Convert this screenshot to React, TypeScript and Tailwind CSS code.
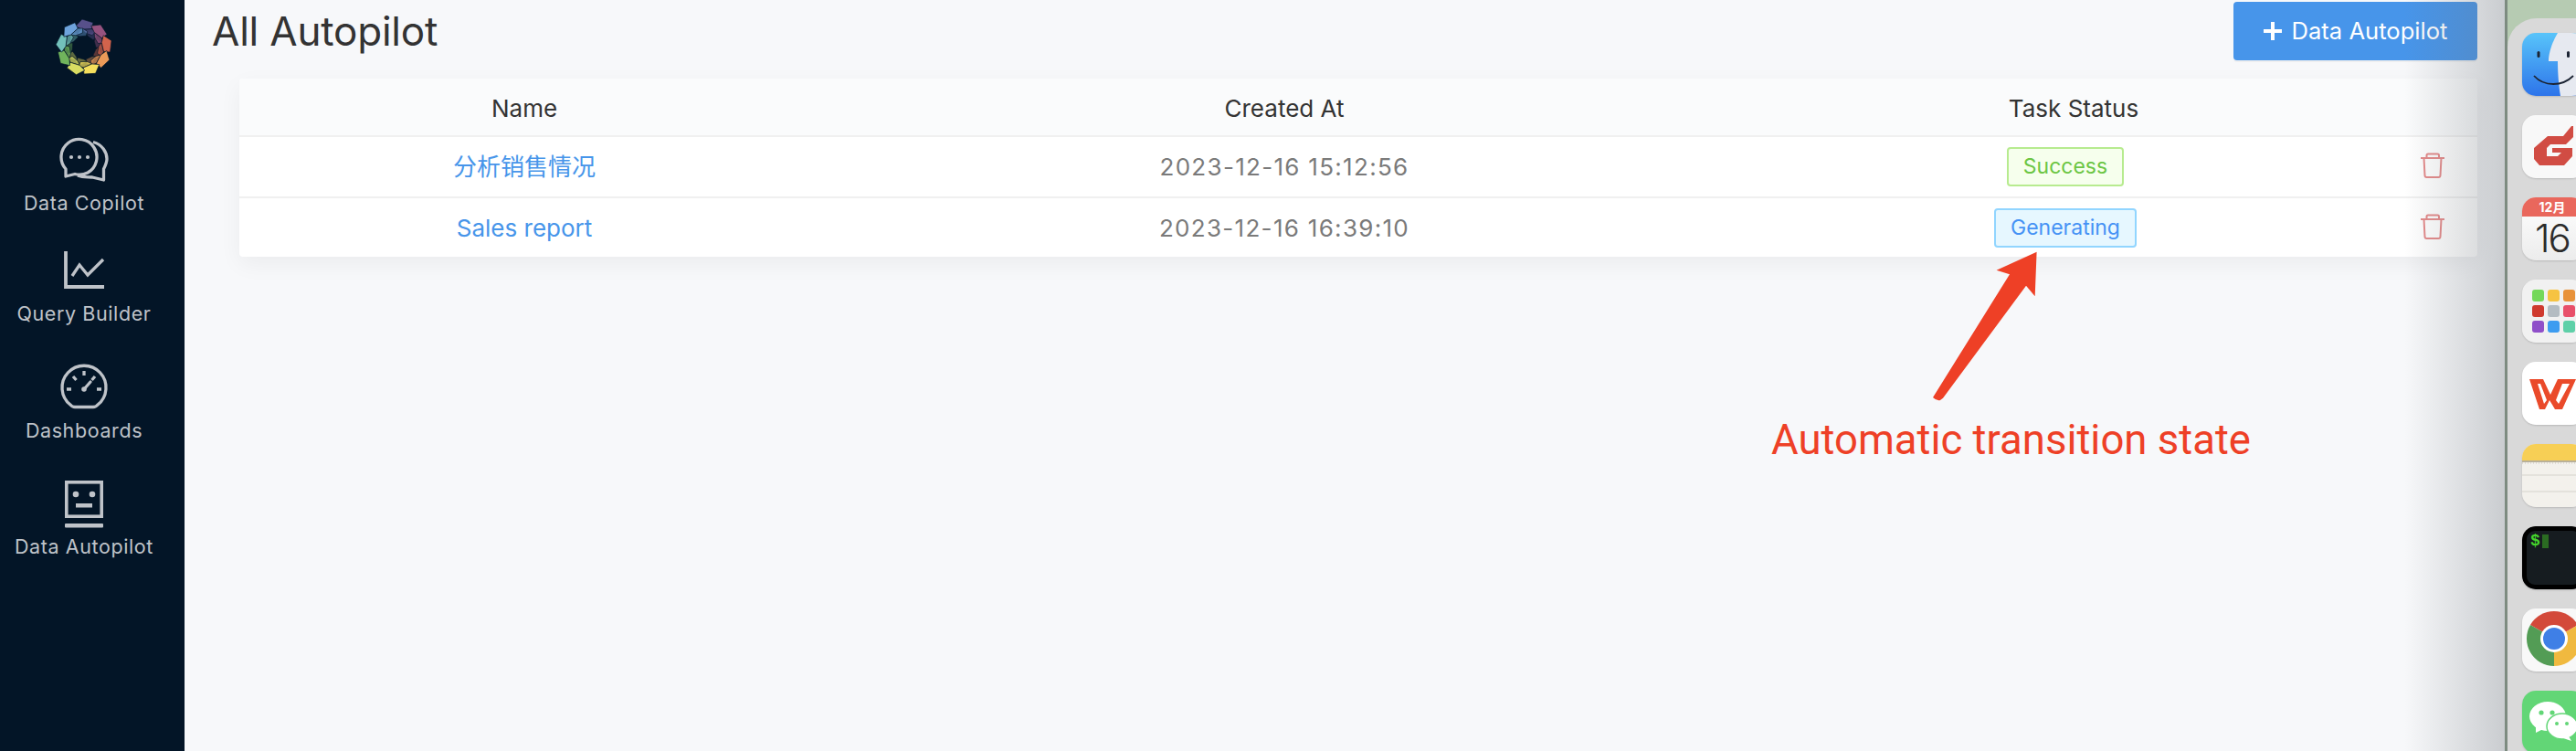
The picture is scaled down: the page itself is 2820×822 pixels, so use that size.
import React from 'react';

const petals = [
  { angle: 0, color: '#57508a' },
  { angle: 40, color: '#96527f' },
  { angle: 80, color: '#d2634c' },
  { angle: 120, color: '#ec9a58' },
  { angle: 160, color: '#f4de5c' },
  { angle: 200, color: '#d9dc62' },
  { angle: 240, color: '#70b45c' },
  { angle: 280, color: '#73c1bb' },
  { angle: 320, color: '#6ea3dc' },
];

// petal bands as [radius, degrees] pairs, swept clockwise going inward
const bands: { pts: [number, number][]; opacity: number }[] = [
  { pts: [[16, 6], [21, 36], [18, 52], [13, 50], [13, 20]], opacity: 0.42 },
  { pts: [[20, -6], [22, 22], [21, 36], [16, 34], [16, 6]], opacity: 0.72 },
  { pts: [[25, -22], [31, -4], [29, 20], [22, 22], [20, -6]], opacity: 1 },
];

const toPoints = (pts: [number, number][]) =>
  pts
    .map(([r, d]) => {
      const a = (d * Math.PI) / 180;
      return `${(r * Math.sin(a)).toFixed(2)},${(-r * Math.cos(a)).toFixed(2)}`;
    })
    .join(' ');

const Logo: React.FC = () => (
  <svg width="66" height="66" viewBox="-33 -33 66 66">
    {petals.map((p) => (
      <g key={p.angle} transform={`rotate(${p.angle})`} fill={p.color} stroke="#031527" strokeWidth="0.6">
        {bands.map((b) => (
          <polygon key={b.opacity} points={toPoints(b.pts)} fillOpacity={b.opacity} />
        ))}
      </g>
    ))}
  </svg>
);

const ChatIcon = () => (
  <svg width="54" height="54" viewBox="0 0 54 54" fill="none" stroke="#bfc3c9" strokeWidth="3.3" strokeLinejoin="round">
    <path d="M7 46 V38 A19.5 19.5 0 1 1 31 42 A20 20 0 0 1 17 43.5 Z" />
    <path d="M37 8.5 C47 11 52 20 52 27 C52 31 50 35 48.5 38 V50 L36 47 C31 46.5 26 47.5 20 45" />
    <g fill="#bfc3c9" stroke="none">
      <circle cx="13" cy="25" r="2.1" />
      <circle cx="22" cy="25" r="2.1" />
      <circle cx="31" cy="25" r="2.1" />
    </g>
  </svg>
);

const ChartIcon = () => (
  <svg width="54" height="54" viewBox="0 0 54 54" fill="none" stroke="#bfc3c9">
    <path d="M7 7 V46 H49" strokeWidth="3.8" />
    <path d="M14 34 L22 22 L31 33 L48 16" strokeWidth="3.3" />
  </svg>
);

const GaugeIcon = () => (
  <svg width="54" height="54" viewBox="0 0 54 54" fill="none" stroke="#bfc3c9" strokeWidth="3.3">
    <path d="M17 48.5 H37 Q40 48.5 42 46 A24 24 0 1 0 12 46 Q14 48.5 17 48.5 Z" />
    <path d="M27 9 V14 M15 15 L18.5 19 M39 15 L35.5 19 M8 29 H13 M41 29 H46" />
    <path d="M27 29 L34 21" strokeLinecap="round" />
    <circle cx="27" cy="29" r="2.8" fill="#bfc3c9" stroke="none" />
  </svg>
);

const RobotIcon = () => (
  <svg width="54" height="54" viewBox="0 0 54 54" fill="none">
    <rect x="7.8" y="2.8" width="38.4" height="37.4" stroke="#bfc3c9" strokeWidth="3.6" />
    <circle cx="18" cy="16" r="3.3" fill="#bfc3c9" />
    <circle cx="36" cy="16" r="3.3" fill="#bfc3c9" />
    <rect x="18" y="26" width="18" height="4.5" fill="#bfc3c9" />
    <rect x="6" y="48" width="42" height="4.5" rx="1" fill="#bfc3c9" />
  </svg>
);

const TrashIcon = () => (
  <svg width="28" height="28" viewBox="0 0 28 28" fill="none" stroke="#e58a8a" strokeWidth="2">
    <path d="M1 6 H27" />
    <path d="M7.5 6 V3 Q7.5 1.5 9 1.5 H19.5 Q21 1.5 21 3 V6" />
    <path d="M4.5 6 L5.5 25 Q5.6 27 7.5 27 H20.5 Q22.4 27 22.5 25 L23.5 6" />
  </svg>
);

const SideItem: React.FC<{ icon: React.ReactNode; label: string; className: string }> = ({ icon, label, className }) => (
  <div className={`flex flex-col items-center ${className}`}>
    {icon}
    <span className="h-[26px] whitespace-nowrap text-[21.5px] leading-[26px] tracking-[0.6px] text-[#bfc3c9]">{label}</span>
  </div>
);

const Finder = () => (
  <svg width="69" height="69" viewBox="0 0 69 69">
    <defs>
      <linearGradient id="finderBlue" x1="0" y1="0" x2="0" y2="1">
        <stop offset="0" stopColor="#58c4fa" />
        <stop offset="1" stopColor="#2d74ea" />
      </linearGradient>
    </defs>
    <rect width="69" height="69" fill="url(#finderBlue)" />
    <path d="M39 0 C33 10 29 22 29 31 H39 C39 44 40 58 42 69 H69 V0 Z" fill="#e6e9f0" />
    <rect x="16.5" y="20" width="3" height="7" rx="1.5" fill="#1c2433" />
    <rect x="49" y="20" width="3" height="7" rx="1.5" fill="#1c2433" />
    <path d="M13 47 C24 59 44 59 56 47" fill="none" stroke="#1c2433" strokeWidth="1.8" />
  </svg>
);

const GApp = () => (
  <svg width="69" height="69" viewBox="0 0 69 69">
    <rect width="69" height="69" fill="#f8f8f8" />
    <path d="M13 36 L28 23 H45 L54 12 H56 V24 L48 32 H31 L27 36 V45 H39 L43 41 H33 V36 H55 V45 L46 55 H19 L13 48 Z" fill="#d14c43" />
  </svg>
);

const Calendar = () => (
  <div className="flex h-full w-[59px] flex-col bg-gradient-to-b from-white to-[#ececec]">
    <div className="flex h-[21px] items-center justify-center bg-[#e9675c] pl-[7px] text-[14px] font-bold text-white">12月</div>
    <div className="pl-[7px] text-center text-[42px] leading-[47px] font-light tracking-[-2px] text-[#2b2b2b]">16</div>
  </div>
);

const launchColors = ['#74d85a', '#f6c342', '#e8923a', '#cf3a2e', '#b4bcc2', '#e8506a', '#8f4fc9', '#3d9cf0', '#5ed0a8'];

const Launchpad = () => (
  <div className="grid h-full w-full grid-cols-[13px_13px_13px] content-start gap-x-[4px] gap-y-[4px] bg-[#f1f1f1] pt-[11px] pl-[11px]">
    {launchColors.map((c) => (
      <svg key={c} width="13" height="13" viewBox="0 0 13 13">
        <rect width="13" height="13" rx="3" fill={c} />
      </svg>
    ))}
  </div>
);

const Wps = () => (
  <svg width="69" height="69" viewBox="0 0 69 69">
    <rect width="69" height="69" fill="#fff" />
    <path d="M8 19 H23 L31 36 L39 19 H59 L44 52 H36 L30 42 L25 52 H19 Z" fill="#ea4a2a" />
    <path d="M17 24 H20 L27 42 L24 46 Z M44 24 H52 L40 46 L37 42 Z" fill="#fff" />
  </svg>
);

const Notes = () => (
  <svg width="69" height="69" viewBox="0 0 69 69">
    <rect width="69" height="69" fill="#f3f1ec" />
    <rect width="69" height="18" fill="#f7cf55" />
    <rect y="18" width="69" height="2" fill="#b8b09a" />
    <path d="M0 21 H69" stroke="#c9c5ba" strokeDasharray="1 2" />
    <path d="M0 34 H69 M0 52 H69" stroke="#d6d3cc" strokeWidth="1.2" />
  </svg>
);

const Terminal = () => (
  <div className="relative h-full w-full rounded-[14px] border-[5px] border-black bg-[#161c20] shadow-[0_1px_2px_rgba(0,0,0,.5)]">
    <span className="absolute top-[2px] left-[4px] font-['Liberation_Mono',monospace] text-[18px] leading-[18px] font-bold text-[#45d42c]">$</span>
    <div className="absolute top-[4px] left-[17px] h-[15px] w-[7px] bg-[#2b6b22]" />
  </div>
);

const Chrome = () => (
  <svg width="69" height="69" viewBox="0 0 69 69">
    <rect width="69" height="69" fill="#f8f8f8" />
    <path d="M35 33 L61 18 A30 30 0 0 0 9 18 Z" fill="#d3493a" />
    <path d="M35 33 L61 18 A30 30 0 0 1 35 63 Z" fill="#f0b93f" />
    <path d="M35 33 L35 63 A30 30 0 0 1 9 18 Z" fill="#539c55" />
    <circle cx="35" cy="33" r="15" fill="#fff" />
    <circle cx="35" cy="33" r="12" fill="#3f7fe6" />
  </svg>
);

const WeChat = () => (
  <svg width="69" height="69" viewBox="0 0 69 69">
    <rect width="69" height="69" fill="#62d676" />
    <ellipse cx="28" cy="28" rx="20" ry="16" fill="#fff" />
    <path d="M15 38 L15 46 L25 41 Z" fill="#fff" />
    <circle cx="21" cy="24" r="2.6" fill="#62d676" />
    <circle cx="33" cy="24" r="2.6" fill="#62d676" />
    <ellipse cx="44" cy="39" rx="17" ry="14" fill="#fff" stroke="#62d676" strokeWidth="1.5" />
    <path d="M51 50 L54 55 L45 52 Z" fill="#fff" />
    <circle cx="38" cy="36" r="2" fill="#62d676" />
    <circle cx="49" cy="36" r="2" fill="#62d676" />
  </svg>
);

const dockItems = [Finder, GApp, Calendar, Launchpad, Wps, Notes, Terminal, Chrome, WeChat];

const rows = [
  { name: '分析销售情况', time: '2023-12-16 15:12:56', status: 'Success', tag: 'border-[#b7eb8f] bg-[#f6ffed] text-[#6cc644]' },
  { name: 'Sales report', time: '2023-12-16 16:39:10', status: 'Generating', tag: 'border-[#91d5ff] bg-[#e6f7ff] text-[#4592f5]' },
];

export default function App() {
  return (
    <div className="flex h-[822px] w-[2820px] overflow-hidden bg-[#f7f8fa] font-['Inter','Noto_Sans_CJK_SC',sans-serif]">
      <aside className="flex w-[202px] shrink-0 flex-col items-center bg-[#031527] pr-[18px]">
        <div className="mt-[19px]">
          <Logo />
        </div>
        <SideItem className="mt-[62px] gap-[8px]" icon={<ChatIcon />} label="Data Copilot" />
        <SideItem className="mt-[33px] gap-[8px]" icon={<ChartIcon />} label="Query Builder" />
        <SideItem className="mt-[41px] gap-[7px]" icon={<GaugeIcon />} label="Dashboards" />
        <SideItem className="mt-[41px] gap-[6px]" icon={<RobotIcon />} label="Data Autopilot" />
      </aside>

      <main className="relative flex-1 pt-[2px] pr-[30px] pl-[30px]">
        <div className="flex h-[64px] items-center justify-between">
          <h1 className="text-[44px] leading-[64px] tracking-[-0.2px] text-[#333]">All Autopilot</h1>
          <button className="flex h-[64px] w-[267px] items-center justify-center gap-[11px] rounded-[4px] bg-[#4795ea] text-[25.6px] text-white shadow-[0_2px_0_rgba(0,0,0,.04)]">
            <svg width="20" height="20" viewBox="0 0 20 20">
              <path d="M8 0 H12 V8 H20 V12 H12 V20 H8 V12 H0 V8 H8 Z" fill="#fff" />
            </svg>
            Data Autopilot
          </button>
        </div>

        <div className="mt-[20px] ml-[30px] rounded-[4px] bg-white shadow-[0_8px_24px_rgba(0,0,0,.05)]">
          <div className="grid h-[64px] grid-cols-[624px_1040px_688px_98px] items-center rounded-t-[4px] border-b-2 border-[#f0f0f0] bg-[#fafbfc] pt-[2px] text-center text-[26px] text-[#333]">
            <div>Name</div>
            <div>Created At</div>
            <div>Task Status</div>
            <div />
          </div>
          {rows.map((r, i) => (
            <div
              key={r.status}
              className={`grid grid-cols-[624px_1040px_688px_98px] items-center text-center text-[26px] ${
                i === 0 ? 'h-[67px] border-b-2 border-[#f0f0f0]' : 'h-[64px] pt-[1px]'
              }`}
            >
              <div className="text-[#4795ea]">{r.name}</div>
              <div className="tracking-[1.3px] text-[#7a7a7a]">{r.time}</div>
              <div className="flex justify-center">
                <span className={`mr-[18px] rounded-[4px] border-2 px-[16px] text-[23px] leading-[39px] ${r.tag}`}>{r.status}</span>
              </div>
              <div className="flex justify-center pb-[4px]">
                <TrashIcon />
              </div>
            </div>
          ))}
        </div>

        {/* window shadow cast by the dock */}
        <div className="pointer-events-none absolute top-0 right-0 bottom-0 w-[110px] bg-gradient-to-r from-transparent to-[rgba(110,116,122,.33)]" />

        {/* red annotation over the page */}
        <svg className="absolute top-[275px] left-[1914px]" width="114" height="166" viewBox="0 0 114 166">
          <path d="M113.6 0.7 L69.6 20.7 L84 25.3 L0 160 Q4 164 8 163 L11 160.7 L102 37.7 L111.7 49.3 Z" fill="#ee4026" />
        </svg>
        <div className="absolute top-[452px] left-[1737px] font-['Roboto',sans-serif] text-[45.5px] leading-[60px] whitespace-nowrap text-[#ee4026]">
          Automatic transition state
        </div>
      </main>

      <div className="w-[78px] shrink-0 overflow-hidden border-l-[3px] border-[#7d8b80] bg-[#b6cbb2] pt-[20px]">
        <div className="flex h-[802px] flex-col gap-[21px] overflow-hidden rounded-tl-[32px] bg-[#d9d9d9] pt-[16px] pl-[16px]">
          {dockItems.map((Item, i) => (
            <div key={i} className="h-[69px] w-[69px] shrink-0 overflow-hidden rounded-[15px] shadow-[0_1px_2px_rgba(0,0,0,.15)]">
              <Item />
            </div>
          ))}
        </div>
      </div>
    </div>
  );
}
